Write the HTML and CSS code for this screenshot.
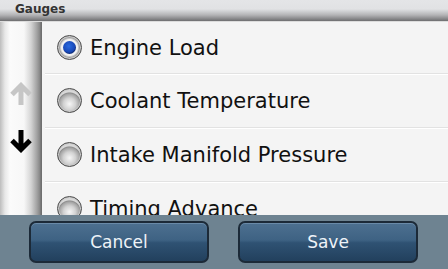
FILE: index.html
```html
<!DOCTYPE html>
<html>
<head>
<meta charset="utf-8">
<link rel="stylesheet" href="styles.css">
</head>
<body>
<div class="app">
  <div class="header"><span class="title">Gauges</span></div>
  <div class="main">
    <div class="scroll">
      <svg class="arrow up" width="24" height="24" viewBox="0 0 24 24"><path d="M12 23 V4 M3 12.5 L12 3.5 L21 12.5" fill="none" stroke="#c6c6c6" stroke-width="5"/></svg>
      <svg class="arrow down" width="24" height="24" viewBox="0 0 24 24"><path d="M12 1 V20 M3 11.5 L12 20.5 L21 11.5" fill="none" stroke="#000" stroke-width="5"/></svg>
    </div>
    <div class="list">
      <div class="row"><span class="radio checked"><span class="dot"></span></span><span class="label">Engine Load</span></div>
      <div class="row"><span class="radio"></span><span class="label">Coolant Temperature</span></div>
      <div class="row"><span class="radio"></span><span class="label">Intake Manifold Pressure</span></div>
      <div class="row"><span class="radio"></span><span class="label">Timing Advance</span></div>
    </div>
  </div>
  <div class="footer">
    <button class="btn">Cancel</button>
    <button class="btn">Save</button>
  </div>
</div>
</body>
</html>
```
FILE: styles.css
```css
html, body {
  margin: 0;
  padding: 0;
  width: 448px;
  height: 269px;
  overflow: hidden;
  font-family: "DejaVu Sans", "Liberation Sans", sans-serif;
}
.app {
  display: flex;
  flex-direction: column;
  width: 448px;
  height: 269px;
}
.header {
  height: 22px;
  flex: none;
  background: linear-gradient(to bottom, #e4e5e7 0px, #e1e2e4 9px, #b4b4b6 15px, #6e6e70 21px, #dcdcdc 21px, #dcdcdc 22px);
  display: flex;
  align-items: flex-start;
  padding-left: 15px;
  box-sizing: border-box;
}
.title {
  font-weight: bold;
  font-size: 12px;
  color: #333;
  line-height: 12px;
  margin-top: 3px;
}
.main {
  flex: 1;
  display: flex;
  min-height: 0;
  overflow: hidden;
}
.scroll {
  width: 42px;
  flex: none;
  background: linear-gradient(to right, #bdbdbd 0px, #e8e8e8 5px, #fbfbfb 10px, #f7f7f7 24px, #d4d4d4 31px, #a2a2a2 37px, #858585 40px, #6f6f6f 41px, #6f6f6f 42px);
  display: flex;
  flex-direction: column;
  align-items: center;
  padding-top: 60px;
  padding-right: 1px;
  gap: 23px;
  box-sizing: border-box;
}
.arrow { display: block; }
.list {
  flex: 1;
  background: #f4f4f4;
  display: flex;
  flex-direction: column;
}
.row {
  flex: none;
  height: 53px;
  display: flex;
  align-items: center;
  margin-left: 3px;
  border-bottom: 1px solid #e2e2e2;
  box-shadow: 0 1px 0 #ffffff;
}
.row:first-child {
  height: 51px;
}
.radio {
  width: 25px;
  height: 25px;
  box-sizing: border-box;
  border-radius: 50%;
  border: 1px solid #4a4a4a;
  margin-left: 12px;
  margin-right: 8px;
  background: radial-gradient(circle at 50% 65%, #f6f6f6 0px, #d2d2d2 6px, #a4a4a4 10px, #8e8e8e 11px, #d8d8d8 12px);
  box-shadow: inset 0 0 0 1px #cacaca;
  display: flex;
  align-items: center;
  justify-content: center;
  flex: none;
}
.radio.checked {
  background: radial-gradient(circle at 50% 50%, #f2f2f2 8px, #a0a0a0 10px, #d0d0d0 12px);
}
.dot {
  width: 13px;
  height: 13px;
  border-radius: 50%;
  background: radial-gradient(circle at 45% 40%, #2a6be0 0px, #1848b8 6px, #0f2f80 7px);
}
.label {
  font-size: 21px;
  color: #111;
  white-space: nowrap;
}
.footer {
  height: 54px;
  flex: none;
  background: #6e8391;
  display: flex;
  align-items: flex-start;
  padding-top: 6px;
  padding-left: 29px;
  gap: 29px;
  box-sizing: border-box;
}
.btn {
  width: 180px;
  height: 42px;
  border: 2px solid #1c2a38;
  border-radius: 7px;
  background: linear-gradient(to bottom, #4d7090 0%, #3e6283 45%, #2f5273 52%, #22405d 100%);
  color: #eef3f8;
  font-family: "DejaVu Sans", "Liberation Sans", sans-serif;
  font-size: 17px;
  padding: 0;
  box-shadow: inset 0 1px 0 #6a8aa8;
}
```
